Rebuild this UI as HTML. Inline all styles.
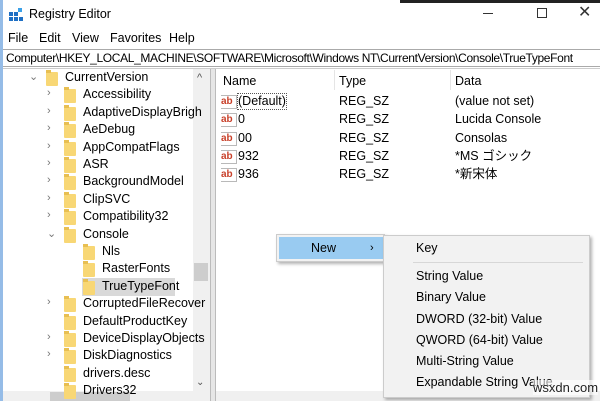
<!DOCTYPE html>
<html><head><style>
*{margin:0;padding:0;box-sizing:border-box}
body{width:600px;height:401px;overflow:hidden;background:#fff;font-family:"Liberation Sans","Noto Sans CJK JP",sans-serif;font-size:12px;color:#000;position:relative}
.a{position:absolute;white-space:nowrap}
.f{position:absolute;width:12px;height:14px;background:#f8d775;border-radius:1px}
.f:before{content:"";position:absolute;left:0;top:-2px;width:5px;height:3px;background:#e8bf52}
.ab{position:absolute;width:16px;height:14px;font-size:10px;font-weight:bold;color:#c8402a;border:1px solid #b9b9b9;border-left:none;line-height:11px}
.t{position:absolute;font-size:12.5px;line-height:15px;white-space:nowrap}
</style></head><body>
<div class="a" style="left:400px;top:0;width:200px;height:3px;background:#222"></div>
<div class="a" style="left:0;top:0;width:3px;height:401px;background:#2b79d0;opacity:.5"></div>
<svg class="a" style="left:8px;top:7px" width="16" height="16"><rect x="1" y="5" width="4" height="4" fill="#1e6fc4"/><rect x="6" y="5" width="4" height="4" fill="#1e6fc4"/><rect x="1" y="10" width="4" height="4" fill="#1e6fc4"/><rect x="6" y="10" width="4" height="4" fill="#1e6fc4"/><rect x="11" y="10" width="4" height="4" fill="#1e6fc4"/><rect x="10" y="1" width="4" height="4" fill="#3aa0e8"/></svg>
<div class="t" style="left:29px;top:7px;font-size:12.5px">Registry Editor</div>
<div class="a" style="left:483px;top:13px;width:10px;height:1px;background:#333"></div>
<div class="a" style="left:537px;top:8px;width:10px;height:10px;border:1px solid #333"></div>
<div class="a" style="left:578px;top:2px;font-size:16px;color:#333">✕</div>
<div class="t" style="left:8px;top:31px">File</div>
<div class="t" style="left:39px;top:31px">Edit</div>
<div class="t" style="left:72px;top:31px">View</div>
<div class="t" style="left:110px;top:31px">Favorites</div>
<div class="t" style="left:169px;top:31px">Help</div>
<div class="a" style="left:3px;top:49px;width:597px;height:18px;border-top:1px solid #aaa;border-bottom:1px solid #aaa;background:#fff"></div>
<div class="t" style="left:6px;top:51px;font-size:12px;letter-spacing:-0.35px">Computer\HKEY_LOCAL_MACHINE\SOFTWARE\Microsoft\Windows NT\CurrentVersion\Console\TrueTypeFont</div>
<div class="a" style="left:3px;top:68px;width:597px;height:333px;border-top:1px solid #ccc"></div>
<!-- tree -->
<div class="a" style="left:193px;top:69px;width:17px;height:322px;background:#f0f0f0"></div>
<div class="a" style="left:194px;top:263px;width:14px;height:18px;background:#cdcdcd"></div>
<div class="a" style="left:197px;top:72px;font-size:11px;color:#555">^</div>
<div class="a" style="left:196px;top:377px;font-size:10px;color:#555">⌄</div>
<div class="a" style="left:3px;top:391px;width:207px;height:10px;background:#f0f0f0"></div>
<div class="a" style="left:50px;top:392px;width:80px;height:9px;background:#cdcdcd"></div>
<div class="a" style="left:210px;top:69px;width:6px;height:332px;background:#e6e6e6;border-left:1px solid #bbb;border-right:1px solid #bbb"></div>
<div class="a" style="left:216px;top:391px;width:384px;height:10px;background:#f0f0f0"></div>
<div class="a" style="left:82px;top:278px;width:93px;height:18px;background:#d9d9d9"></div>
<div id="tree"></div>
<!-- list -->
<div class="t" style="left:223px;top:74px">Name</div>
<div class="t" style="left:339px;top:74px">Type</div>
<div class="t" style="left:455px;top:74px">Data</div>
<div class="a" style="left:334px;top:70px;width:1px;height:20px;background:#e5e5e5"></div>
<div class="a" style="left:450px;top:70px;width:1px;height:20px;background:#e5e5e5"></div>
<div id="list"></div>
<!-- menu -->
<div class="a" style="left:276px;top:234px;width:109px;height:28px;background:#f2f2f2;border:1px solid #ccc;box-shadow:2px 2px 3px rgba(0,0,0,.3)"></div>
<div class="a" style="left:279px;top:237px;width:104px;height:22px;background:#99cbf1"></div>
<div class="t" style="left:311px;top:241px">New</div>
<div class="t" style="left:370px;top:241px;font-size:11px">›</div>
<div class="a" style="left:383px;top:235px;width:207px;height:163px;background:#f2f2f2;border:1px solid #ccc;box-shadow:2px 2px 3px rgba(0,0,0,.3)"></div>
<div class="a" style="left:413px;top:262px;width:170px;height:1px;background:#d7d7d7"></div>
<div class="t" style="left:416px;top:241px">Key</div>
<div class="t" style="left:416px;top:269px">String Value</div>
<div class="t" style="left:416px;top:290px">Binary Value</div>
<div class="t" style="left:416px;top:312px">DWORD (32-bit) Value</div>
<div class="t" style="left:416px;top:333px">QWORD (64-bit) Value</div>
<div class="t" style="left:416px;top:354px">Multi-String Value</div>
<div class="t" style="left:416px;top:375px">Expandable String Value</div>
<div class="t" style="left:533px;top:380px;font-size:13px;color:#222;background:rgba(255,255,255,.6)">wsxdn.com</div>
<script>
var items=[["CurrentVersion",1,"v"],["Accessibility",2,">"],["AdaptiveDisplayBrigh",2,">"],["AeDebug",2,">"],["AppCompatFlags",2,">"],["ASR",2,">"],["BackgroundModel",2,">"],["ClipSVC",2,">"],["Compatibility32",2,">"],["Console",2,"v"],["Nls",3,""],["RasterFonts",3,""],["TrueTypeFont",3,""],["CorruptedFileRecover",2,">"],["DefaultProductKey",2,""],["DeviceDisplayObjects",2,">"],["DiskDiagnostics",2,">"],["drivers.desc",2,""],["Drivers32",2,""]];
var h="";items.forEach(function(it,i){var y=70+i*17.4;var fx=it[1]==1?46:it[1]==2?64:83;
h+='<div class="f" style="left:'+fx+'px;top:'+(y+2)+'px"></div>';
if(it[2])h+='<div class="a" style="left:'+(fx-17)+'px;top:'+(y)+'px;font-size:11px;color:#777">'+(it[2]=="v"?"⌄":"›")+'</div>';
h+='<div class="t" style="left:'+(fx+19)+'px;top:'+(y)+'px">'+it[0]+'</div>';});
document.getElementById("tree").innerHTML=h;
var rows=[["(Default)","(value not set)"],["0","Lucida Console"],["00","Consolas"],["932","*MS ゴシック"],["936","*新宋体"]];
h="";rows.forEach(function(r,i){var y=94+i*18.3;
h+='<div class="ab" style="left:221px;top:'+(y+1)+'px">ab</div>';
h+='<div class="t" style="left:238px;top:'+y+'px;'+(i==0?'outline:1px dotted #555':'')+'">'+r[0]+'</div>';
h+='<div class="t" style="left:339px;top:'+y+'px">REG_SZ</div><div class="t" style="left:455px;top:'+y+'px">'+r[1]+'</div>';});
document.getElementById("list").innerHTML=h;
</script>
</body></html>
